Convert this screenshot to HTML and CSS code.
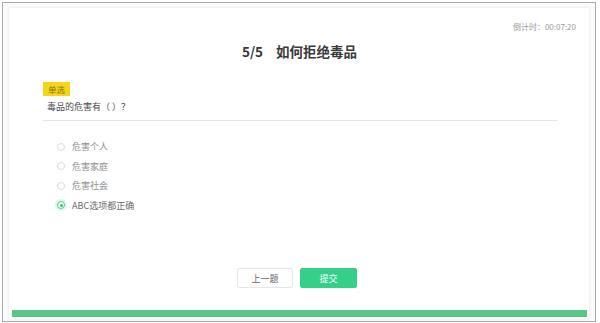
FILE: index.html
```html
<!DOCTYPE html>
<html lang="zh">
<head>
<meta charset="utf-8">
<link rel="stylesheet" href="styles.css">
</head>
<body>
<div class="frame">
  <div class="card">
    <div class="timer">倒计时：00:07:20</div>
    <div class="title"><span class="num">5/5</span><span>如何拒绝毒品</span></div>
    <div class="body">
      <div class="badge">单选</div>
      <div class="question">毒品的危害有（ ）？</div>
      <ul class="options">
        <li class="option"><span class="radio"></span>危害个人</li>
        <li class="option"><span class="radio"></span>危害家庭</li>
        <li class="option"><span class="radio"></span>危害社会</li>
        <li class="option checked"><span class="radio"></span>ABC选项都正确</li>
      </ul>
    </div>
    <div class="actions">
      <button class="btn prev">上一题</button>
      <button class="btn submit">提交</button>
    </div>
    <div class="progress"></div>
  </div>
</div>
</body>
</html>
```
FILE: styles.css
```css
* { box-sizing: border-box; }
html, body { margin: 0; padding: 0; background: #fff; }
body {
  font-family: "Noto Sans CJK SC", "Noto Sans", sans-serif;
  width: 600px;
  height: 323px;
  overflow: hidden;
}
.frame {
  margin: 2px 0 0 2px;
  width: 594px;
  height: 320px;
  border: 1px solid #a9a9a9;
  padding: 5px 6px 2px 6px;
  background: #fbfbfb;
}
.card {
  height: 100%;
  background: #fff;
  box-shadow: 0 0 3px rgba(0,0,0,0.10);
  padding: 0 2px 2px 3px;
  display: flex;
  flex-direction: column;
}
.timer {
  margin-top: 14px;
  padding-right: 11px;
  text-align: right;
  font-size: 8px;
  line-height: 10px;
  color: #9a9a9a;
}
.title {
  margin-top: 11px;
  text-align: center;
  font-size: 13.5px;
  line-height: 16px;
  font-weight: bold;
  color: #3a3a3a;
}
.title .num { margin-right: 13px; }
.body {
  margin: 23px 29px 0 31px;
}
.badge {
  width: fit-content;
  height: 14px;
  line-height: 14px;
  padding: 0 5px;
  background: #f5d51a;
  color: #8a7400;
  font-size: 8.5px;
}
.question {
  margin-top: 5px;
  padding-left: 4px;
  padding-bottom: 7px;
  font-size: 9px;
  line-height: 12px;
  color: #4a4a4a;
  border-bottom: 1px solid #e6e6e6;
}
.options {
  list-style: none;
  margin: 16px 0 0;
  padding: 0 0 0 14px;
}
.option {
  height: 19.5px;
  display: flex;
  align-items: center;
  font-size: 9px;
  color: #8f8f8f;
}
.radio {
  width: 8px;
  height: 8px;
  border-radius: 50%;
  border: 1px solid #dcdcdc;
  margin-right: 7px;
  flex: none;
  display: flex;
  align-items: center;
  justify-content: center;
}
.option.checked { color: #6a6a6a; }
.option.checked .radio {
  border-color: #3ccf8e;
  box-shadow: 0 0 0 2px rgba(60,207,142,0.18);
}
.option.checked .radio::after {
  content: "";
  width: 3px;
  height: 3px;
  border-radius: 50%;
  background: #2fbf7e;
}
.actions {
  margin-top: 53px;
  display: flex;
  justify-content: center;
  gap: 7px;
  padding-right: 5px;
}
.btn {
  width: 56px;
  height: 20px;
  border-radius: 2px;
  font-family: inherit;
  font-size: 9px;
  padding: 0;
  cursor: pointer;
}
.btn.prev {
  background: #fff;
  border: 1px solid #e6e6e6;
  color: #666;
}
.btn.submit {
  width: 57px;
  background: #34d08a;
  border: 1px solid #34d08a;
  color: #fff;
}
.progress {
  margin-top: auto;
  height: 7px;
  background: #57c785;
}
```
